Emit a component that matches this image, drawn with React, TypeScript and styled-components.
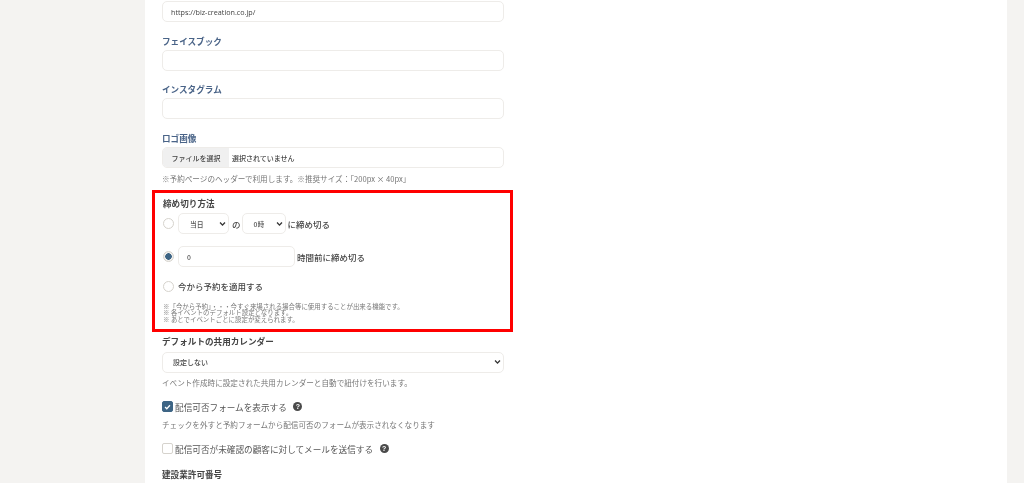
import React from "react";
import styled, { createGlobalStyle } from "styled-components";

const Global = createGlobalStyle`
  html, body { margin: 0; padding: 0; height: 483px; overflow: hidden; background: #f4f3f1; }
  * { box-sizing: border-box; }
  body { font-family: "Noto Sans CJK JP", "Noto Sans", sans-serif; color: #4a4a4a; }
`;

const Page = styled.div`
  display: flex;
  height: 483px;
  overflow: hidden;
  padding: 0 17px 0 145px;
  background: #f4f3f1;
  filter: blur(0.3px);
`;
const Panel = styled.main`
  flex: 1;
  background: #fff;
  padding: 1px 0 0 17px;
`;
const Column = styled.div`
  width: 342px;
`;
const Label = styled.div<{ $top: number; $blue?: boolean }>`
  font-size: 8.6px;
  font-weight: 700;
  line-height: 14px;
  margin-top: ${(p) => p.$top}px;
  color: ${(p) => (p.$blue ? "#4a6488" : "#444")};
  white-space: nowrap;
`;
const Field = styled.div<{ $top: number }>`
  position: relative;
  height: 21px;
  margin-top: ${(p) => p.$top}px;
  border: 1px solid #eeece9;
  border-radius: 5px;
  background: #fff;
  display: flex;
  align-items: center;
  font-size: 7px;
  font-weight: 500;
  color: #444;
  white-space: nowrap;
`;
const UrlText = styled.span`
  padding-left: 8px;
  font-family: "Open Sans", sans-serif;
  font-size: 7.2px;
`;
const FileButton = styled.span`
  height: 100%;
  width: 66px;
  background: #f0f0f0;
  border-radius: 4px 0 0 4px;
  display: flex;
  align-items: center;
  justify-content: center;
  flex: none;
`;
const FileName = styled.span`
  padding-left: 3px;
`;
const Hint = styled.div<{ $top: number }>`
  font-size: 7.6px;
  line-height: 12px;
  margin-top: ${(p) => p.$top}px;
  color: #777;
  white-space: nowrap;
`;
const Highlight = styled.section`
  width: 361px;
  height: 142px;
  margin: 5px 0 0 -10px;
  border: 3px solid #f00;
  padding: 3px 0 0 8px;
`;
const Row = styled.div<{ $top: number; $h: number }>`
  display: flex;
  align-items: center;
  height: ${(p) => p.$h}px;
  margin-top: ${(p) => p.$top}px;
  font-size: 8.5px;
  font-weight: 500;
  color: #444;
  white-space: nowrap;
`;
const Radio = styled.span<{ $on?: boolean }>`
  width: 11px;
  height: 11px;
  flex: none;
  margin-right: 4px;
  border-radius: 50%;
  border: 1px solid #d6d3cd;
  background: ${(p) => (p.$on ? "radial-gradient(circle, #3e6585 0 3px, #f1f0ee 3.5px)" : "#fff")};
`;
const Box = styled.span<{ $w: number }>`
  position: relative;
  width: ${(p) => p.$w}px;
  height: 21px;
  flex: none;
  border: 1px solid #eeece9;
  border-radius: 5px;
  display: flex;
  align-items: center;
  font-size: 6.8px;
  font-weight: 500;
  color: #555;
`;
const BoxText = styled.span<{ $left: number }>`
  padding-left: ${(p) => p.$left}px;
`;
const Chevron = styled.svg`
  position: absolute;
  right: 2px;
  top: 50%;
  margin-top: -3px;
  width: 7px;
  height: 6px;
`;
const Between = styled.span<{ $l: number; $r: number }>`
  margin: 0 ${(p) => p.$r}px 0 ${(p) => p.$l}px;
`;
const Notes = styled.div`
  margin-top: 10.5px;
  font-size: 6.45px;
  line-height: 6.6px;
  color: #777;
  white-space: nowrap;
`;
const Check = styled.span<{ $on?: boolean }>`
  width: 11px;
  height: 11px;
  flex: none;
  margin-right: 2px;
  border-radius: 2px;
  border: 1px solid ${(p) => (p.$on ? "#3e6585" : "#d6d3cd")};
  background: ${(p) => (p.$on ? "#3e6585" : "#fff")};
  display: flex;
  align-items: center;
  justify-content: center;
`;
const CheckRow = styled(Row)`
  font-size: 8.65px;
  font-weight: 400;
  color: #555;
`;
const Help = styled.span`
  width: 9px;
  height: 9px;
  margin-left: 6.5px;
  flex: none;
  border-radius: 50%;
  background: #4a4a4a;
  color: #fff;
  font: 700 7px/9px "Liberation Sans", sans-serif;
  text-align: center;
`;

const Arrow = () => (
  <Chevron viewBox="0 0 10 8" aria-hidden="true">
    <path d="M1.5 2 5 5.6 8.5 2" fill="none" stroke="#333" strokeWidth="2" />
  </Chevron>
);

export default function App() {
  return (
    <Page>
      <Global />
      <Panel>
        <Column>
          <Field $top={0}>
            <UrlText>https://biz-creation.co.jp/</UrlText>
          </Field>
          <Label $top={12} $blue>フェイスブック</Label>
          <Field $top={2} />
          <Label $top={11} $blue>インスタグラム</Label>
          <Field $top={2} />
          <Label $top={12} $blue>ロゴ画像</Label>
          <Field $top={2}>
            <FileButton>ファイルを選択</FileButton>
            <FileName>選択されていません</FileName>
          </Field>
          <Hint $top={5}>※予約ページのヘッダーで利用します。※推奨サイズ：「200px × 40px」</Hint>
          <Highlight>
            <Label $top={0}>締め切り方法</Label>
            <Row $top={3} $h={21}>
              <Radio />
              <Box $w={51}>
                <BoxText $left={11}>当日</BoxText>
                <Arrow />
              </Box>
              <Between $l={3} $r={1}>の</Between>
              <Box $w={44}>
                <BoxText $left={11}>0時</BoxText>
                <Arrow />
              </Box>
              <Between $l={2} $r={0}>に締め切る</Between>
            </Row>
            <Row $top={12} $h={21}>
              <Radio $on />
              <Box $w={117}>
                <BoxText $left={8}>0</BoxText>
              </Box>
              <Between $l={2} $r={0}>時間前に締め切る</Between>
            </Row>
            <Row $top={12} $h={14}>
              <Radio />
              今から予約を適用する
            </Row>
            <Notes>
              ※「今から予約」・・・今すぐ来場される場合等に使用することが出来る機能です。
              <br />
              ※ 各イベントのデフォルト設定となります。
              <br />
              ※ あとでイベントごとに設定が変えられます。
            </Notes>
          </Highlight>
          <Label $top={2}>デフォルトの共用カレンダー</Label>
          <Field $top={3.5}>
            <BoxText $left={10}>設定しない</BoxText>
            <Arrow />
          </Field>
          <Hint $top={4}>イベント作成時に設定された共用カレンダーと自動で紐付けを行います。</Hint>
          <CheckRow $top={11} $h={14}>
            <Check $on>
              <svg width="7" height="6" viewBox="0 0 10 8" aria-hidden="true">
                <path d="M1.5 4 4 6.5 8.5 1.5" fill="none" stroke="#fff" strokeWidth="1.8" />
              </svg>
            </Check>
            配信可否フォームを表示する
            <Help>?</Help>
          </CheckRow>
          <Hint $top={5.3}>チェックを外すと予約フォームから配信可否のフォームが表示されなくなります</Hint>
          <CheckRow $top={11} $h={14}>
            <Check />
            配信可否が未確認の顧客に対してメールを送信する
            <Help>?</Help>
          </CheckRow>
          <Label $top={11.7}>建設業許可番号</Label>
        </Column>
      </Panel>
    </Page>
  );
}
